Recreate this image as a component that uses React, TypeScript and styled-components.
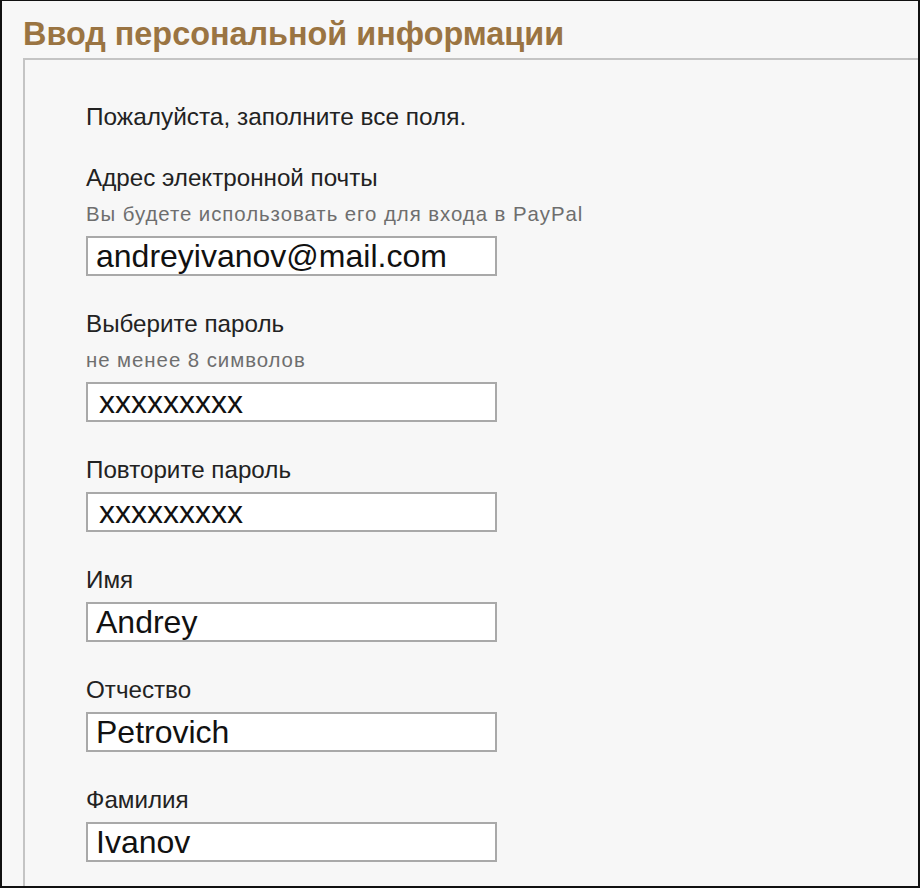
import React from "react";
import styled, { createGlobalStyle } from "styled-components";

const GlobalStyle = createGlobalStyle`
  html, body {
    margin: 0;
    padding: 0;
    background: #ffffff;
  }
  body {
    font-family: "Liberation Sans", Arial, sans-serif;
  }
`;

type Field = {
  label: string;
  hint?: string;
  value: string;
};

const fields: Field[] = [
  {
    label: "Адрес электронной почты",
    hint: "Вы будете использовать его для входа в PayPal",
    value: "andreyivanov@mail.com",
  },
  { label: "Выберите пароль", hint: "не менее 8 символов", value: "xxxxxxxxx" },
  { label: "Повторите пароль", value: "xxxxxxxxx" },
  { label: "Имя", value: "Andrey" },
  { label: "Отчество", value: "Petrovich" },
  { label: "Фамилия", value: "Ivanov" },
];

export default function App() {
  return (
    <>
      <GlobalStyle />
      <Frame>
        <Title>Ввод персональной информации</Title>
        <Panel>
          <Intro>Пожалуйста, заполните все поля.</Intro>
          {fields.map((f) => (
            <FieldBlock key={f.label}>
              <Label>{f.label}</Label>
              {f.hint && <Hint>{f.hint}</Hint>}
              <Input $masked={f.value.startsWith("xxx")}>{f.value}</Input>
            </FieldBlock>
          ))}
        </Panel>
      </Frame>
    </>
  );
}

const Frame = styled.div`
  box-sizing: border-box;
  width: 920px;
  height: 888px;
  border: 2px solid #111;
  border-top-width: 1px;
  background: #f7f7f7;
  display: flex;
  flex-direction: column;
  overflow: hidden;
`;

const Title = styled.h1`
  margin: 0;
  padding: 13px 0 0 21px;
  height: 44px;
  font-size: 32.4px;
  line-height: 40px;
  font-weight: bold;
  color: #9a7442;
`;

const Panel = styled.div`
  flex: 1;
  margin-left: 21px;
  border-top: 2px solid #c4c4c4;
  border-left: 2px solid #c4c4c4;
  padding: 42px 0 0 61px;
  display: flex;
  flex-direction: column;
  gap: 33px;
`;

const Intro = styled.p`
  margin: 0 0 -2px;
  font-size: 24.4px;
  line-height: 30px;
  color: #222;
`;

const FieldBlock = styled.div`
  display: flex;
  flex-direction: column;
`;

const Label = styled.div`
  font-size: 24.2px;
  line-height: 30px;
  color: #222;
  margin-bottom: 7px;
`;

const Hint = styled.div`
  font-size: 20.4px;
  line-height: 22px;
  color: #6e6e6e;
  margin-top: 3px;
  margin-bottom: 11px;
  letter-spacing: 0.95px;
`;

const Input = styled.div<{ $masked?: boolean }>`
  box-sizing: border-box;
  width: 411px;
  height: 40px;
  border: 2px solid #a9a9a9;
  background: #fff;
  padding: 0 0 0 ${(p) => (p.$masked ? "11px" : "8px")};
  font-size: 32px;
  line-height: 36px;
  color: #111;
  white-space: nowrap;
`;
